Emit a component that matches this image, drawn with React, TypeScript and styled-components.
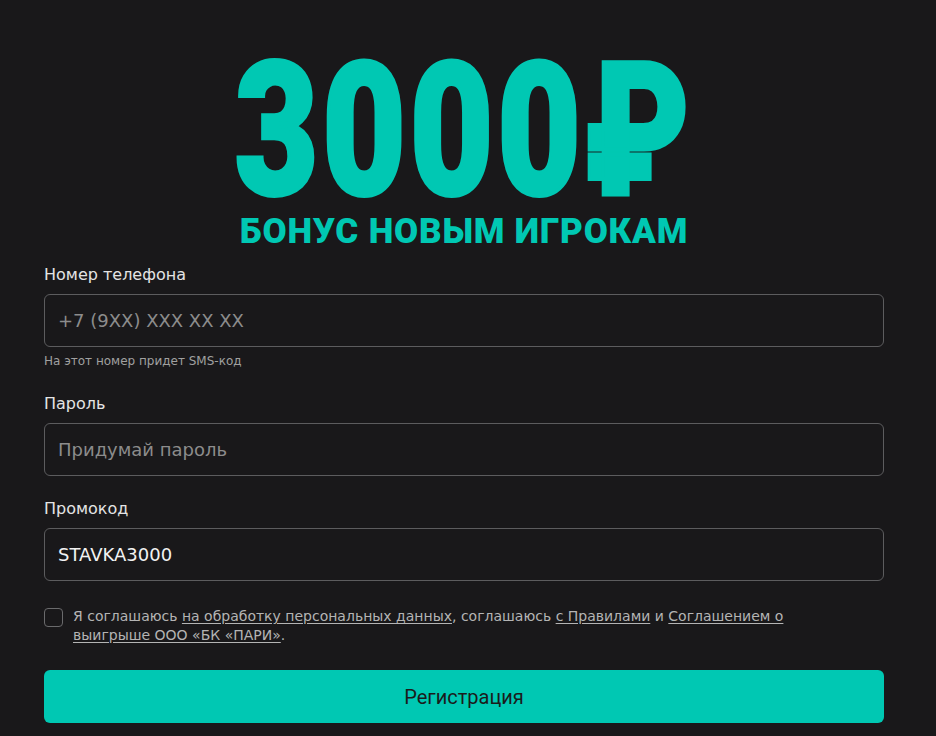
import React from "react";
import styled, { createGlobalStyle } from "styled-components";

const Global = createGlobalStyle`
  html, body {
    margin: 0;
    padding: 0;
    background: #19181a;
  }
  body {
    font-family: "DejaVu Sans", "Liberation Sans", sans-serif;
    color: #e2e2e2;
  }
`;

const Page = styled.div`
  width: 840px;
  margin-left: 44px;
  display: flex;
  flex-direction: column;
`;

const Promo = styled.div`
  display: flex;
  flex-direction: column;
  align-items: center;
  color: #00c8b3;
  font-family: Roboto, "Liberation Sans", sans-serif;
  font-weight: 900;
  padding-top: 36px;
`;

const Amount = styled.div`
  font-size: 185px;
  line-height: 190px;
  height: 172px;
  letter-spacing: 5px;
  -webkit-text-stroke: 4px #00c8b3;
  transform: scaleX(0.78);
`;

const Subtitle = styled.div`
  font-size: 35px;
  line-height: 40px;
  letter-spacing: 0.8px;
  margin-top: 4px;
  margin-bottom: 12px;
`;

const Field = styled.div`
  display: flex;
  flex-direction: column;
  margin-bottom: ${(p: { $gap?: number }) => p.$gap ?? 0}px;
`;

const Label = styled.label`
  font-size: 16px;
  line-height: 22px;
  color: #e4e4e4;
  margin-bottom: 8px;
`;

const Input = styled.input`
  box-sizing: border-box;
  height: 53px;
  width: 100%;
  background: transparent;
  border: 1px solid #5c5c5e;
  border-radius: 6px;
  padding: 0 13px;
  font-family: "DejaVu Sans", "Liberation Sans", sans-serif;
  font-size: 18px;
  color: #f2f2f2;
  outline: none;
  &::placeholder {
    color: #8c8c8c;
  }
`;

const Hint = styled.div`
  font-size: 12px;
  line-height: 16px;
  color: #a0a0a0;
  margin-top: 6px;
`;

const Consent = styled.div`
  display: flex;
  gap: 10px;
  margin-top: 26px;
`;

const Box = styled.span`
  flex: none;
  box-sizing: border-box;
  width: 19px;
  height: 19px;
  border: 1px solid #6a6a6c;
  border-radius: 4px;
  margin-top: 1px;
`;

const ConsentText = styled.p`
  margin: 0;
  max-width: 740px;
  font-size: 14px;
  line-height: 19px;
  color: #b4b4b4;
  a {
    color: #b4b4b4;
    text-decoration: underline;
    text-underline-offset: 2px;
  }
`;

const Button = styled.button`
  margin-top: 25px;
  height: 53px;
  width: 100%;
  border: none;
  border-radius: 6px;
  background: #00c8b3;
  color: #1b1b1b;
  font-family: Roboto, "Liberation Sans", sans-serif;
  font-size: 20px;
`;

export default function App() {
  return (
    <>
      <Global />
      <Page>
        <Promo>
          <Amount>3000₽</Amount>
          <Subtitle>БОНУС НОВЫМ ИГРОКАМ</Subtitle>
        </Promo>
        <Field $gap={24}>
          <Label>Номер телефона</Label>
          <Input placeholder="+7 (9XX) XXX XX XX" />
          <Hint>На этот номер придет SMS-код</Hint>
        </Field>
        <Field $gap={22}>
          <Label>Пароль</Label>
          <Input placeholder="Придумай пароль" />
        </Field>
        <Field>
          <Label>Промокод</Label>
          <Input defaultValue="STAVKA3000" />
        </Field>
        <Consent>
          <Box />
          <ConsentText>
            Я соглашаюсь <a href="#">на обработку персональных данных</a>, соглашаюсь{" "}
            <a href="#">с Правилами</a> и <a href="#">Соглашением о выигрыше ООО «БК «ПАРИ»</a>.
          </ConsentText>
        </Consent>
        <Button>Регистрация</Button>
      </Page>
    </>
  );
}
